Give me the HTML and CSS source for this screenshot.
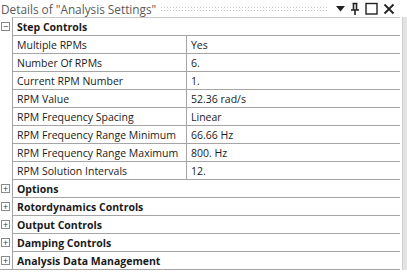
FILE: index.html
```html
<!DOCTYPE html>
<html lang="en">
<head>
  <meta charset="UTF-8">
  <title>Details of "Analysis Settings"</title>
  <link rel="stylesheet" href="styles.css">
</head>
<body>
  <div class="panel">
    <div class="title-bar">
      <span class="title">Details of "Analysis Settings"</span>
      <span class="grip"></span>
      <div class="title-icons">
        <svg width="9" height="6" viewBox="0 0 9 6"><path d="M0 0h9L4.5 5.5z" fill="#222"/></svg>
        <svg width="10" height="13" viewBox="0 0 10 13"><path d="M2.5 1.5h5M3.5 1.5v6M6.5 1.5v6M1 8h8M5 8v5" stroke="#222" stroke-width="1.6" fill="none"/></svg>
        <svg width="13" height="13" viewBox="0 0 13 13"><rect x="1" y="1.5" width="11" height="10.5" stroke="#222" stroke-width="1.4" fill="none"/></svg>
        <svg width="12" height="12" viewBox="0 0 12 12"><path d="M1.5 1.5l9 9M10.5 1.5l-9 9" stroke="#222" stroke-width="1.8"/></svg>
      </div>
    </div>
    <div class="body">
      <div class="grid">
        <div class="row group">
          <span class="toggle">&minus;</span>
          <div class="cell full">Step Controls</div>
        </div>
        <div class="row">
          <span class="toggle blank"></span>
          <div class="cell name">Multiple RPMs</div>
          <div class="cell value">Yes</div>
        </div>
        <div class="row">
          <span class="toggle blank"></span>
          <div class="cell name">Number Of RPMs</div>
          <div class="cell value">6.</div>
        </div>
        <div class="row">
          <span class="toggle blank"></span>
          <div class="cell name">Current RPM Number</div>
          <div class="cell value">1.</div>
        </div>
        <div class="row">
          <span class="toggle blank"></span>
          <div class="cell name">RPM Value</div>
          <div class="cell value">52.36 rad/s</div>
        </div>
        <div class="row">
          <span class="toggle blank"></span>
          <div class="cell name">RPM Frequency Spacing</div>
          <div class="cell value">Linear</div>
        </div>
        <div class="row">
          <span class="toggle blank"></span>
          <div class="cell name">RPM Frequency Range Minimum</div>
          <div class="cell value">66.66 Hz</div>
        </div>
        <div class="row">
          <span class="toggle blank"></span>
          <div class="cell name">RPM Frequency Range Maximum</div>
          <div class="cell value">800. Hz</div>
        </div>
        <div class="row">
          <span class="toggle blank"></span>
          <div class="cell name">RPM Solution Intervals</div>
          <div class="cell value">12.</div>
        </div>
        <div class="row group">
          <span class="toggle">+</span>
          <div class="cell full">Options</div>
        </div>
        <div class="row group">
          <span class="toggle">+</span>
          <div class="cell full">Rotordynamics Controls</div>
        </div>
        <div class="row group">
          <span class="toggle">+</span>
          <div class="cell full">Output Controls</div>
        </div>
        <div class="row group">
          <span class="toggle">+</span>
          <div class="cell full">Damping Controls</div>
        </div>
        <div class="row group">
          <span class="toggle">+</span>
          <div class="cell full">Analysis Data Management</div>
        </div>
      </div>
      <div class="scroll-edge"></div>
    </div>
  </div>
</body>
</html>
```

FILE: styles.css
```css
body {
  margin: 0;
  background: #ffffff;
  font-family: "Open Sans", "Noto Sans", sans-serif;
  font-size: 10.5px;
  color: #1a1a1a;
}
.panel {
  width: 407px;
  height: 277px;
  overflow: hidden;
}
.title-bar {
  display: flex;
  align-items: center;
  height: 17px;
  padding: 0 0 0 1px;
}
.title {
  color: #5a5a5a;
  font-size: 11.8px;
  white-space: nowrap;
}
.grip {
  flex: 1;
  height: 6px;
  margin: 0 7px 0 4px;
  background-image: radial-gradient(circle, #c4c4c4 0.7px, transparent 0.9px);
  background-size: 3px 3px;
}
.title-icons {
  display: flex;
  align-items: center;
  gap: 5px;
  padding-right: 12px;
}
.body {
  display: flex;
}
.grid {
  width: 400px;
  border-bottom: 1px solid #a5a5a5;
}
.row {
  display: flex;
  height: 18px;
}
.toggle {
  width: 12px;
  display: flex;
  align-items: center;
  justify-content: center;
  flex: none;
}
.group .toggle {
  font-size: 9px;
  line-height: 7px;
  color: #333;
  box-sizing: border-box;
  width: 9px;
  height: 9px;
  margin: 5px 2px 0 1px;
  border: 1px solid #8a8a8a;
}
.cell {
  border-top: 1px solid #a5a5a5;
  display: flex;
  align-items: center;
  padding-left: 4px;
  white-space: nowrap;
}
.cell.full {
  flex: 1;
  font-weight: bold;
  border-left: 1px solid #a5a5a5;
}
.cell.name {
  width: 169px;
  border-left: 1px solid #a5a5a5;
}
.cell.value {
  flex: 1;
  border-left: 1px solid #a5a5a5;
}
.row:first-child .cell {
  border-top-color: #c8c8c8;
}
.scroll-edge {
  width: 4px;
  margin-left: 2px;
  background: #e3e3e3;
  border-left: 1px solid #cfcfcf;
}
```
